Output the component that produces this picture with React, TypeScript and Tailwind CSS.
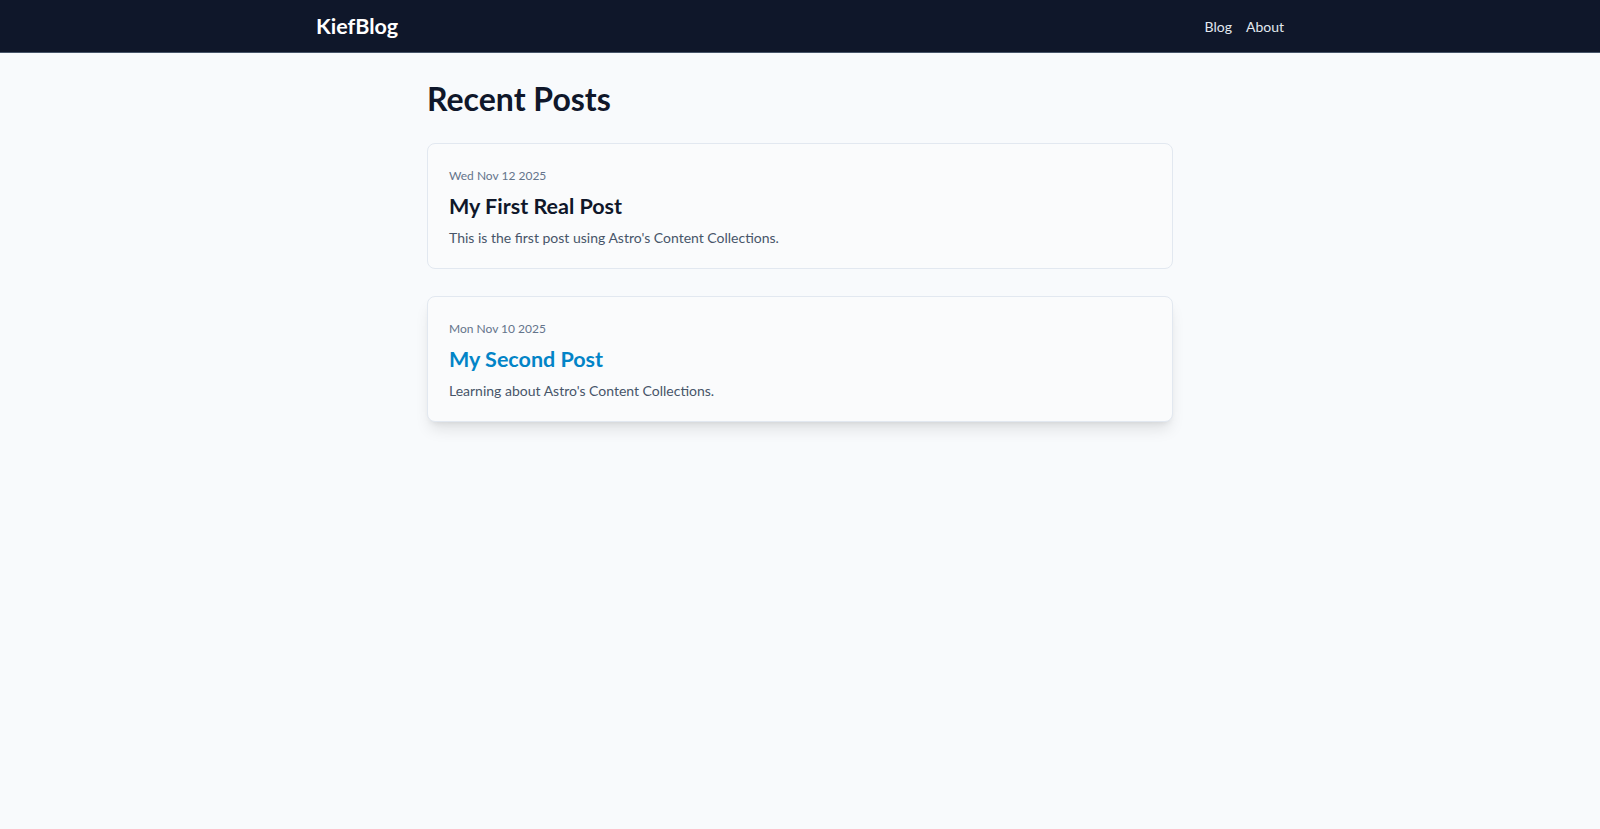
const posts = [
  {
    slug: "first-post",
    date: "Wed Nov 12 2025",
    title: "My First Real Post",
    description: "This is the first post using Astro's Content Collections.",
    hovered: false,
  },
  {
    slug: "second-post",
    date: "Mon Nov 10 2025",
    title: "My Second Post",
    description: "Learning about Astro's Content Collections.",
    hovered: true,
  },
];

export default function App() {
  return (
    <div className="min-h-screen bg-[#f8fafc] font-['Lato',sans-serif] text-[#0f172a]">
      {/* Header */}
      <header className="bg-[#0f172a] border-b border-[#475569]">
        <div className="max-w-5xl mx-auto px-7 h-[52px] flex items-center justify-between">
          <a href="#" className="text-[21.5px] font-bold text-white">
            KiefBlog
          </a>
          <nav className="flex items-center gap-3.5 text-[14px] text-[#e2e8f0]">
            <a href="#">Blog</a>
            <a href="#">About</a>
          </nav>
        </div>
      </header>

      <main className="max-w-3xl mx-auto px-[11px] pt-[26px] pb-8">
        <h1 className="text-[32px] leading-[40px] font-bold mb-6">Recent Posts</h1>

        <div className="flex flex-col gap-[27px]">
          {posts.map((post) => (
            <a
              key={post.slug}
              href="#"
              className={`block bg-[#fafbfc] border border-[#e2e8f0] rounded-lg pl-[21px] pr-5 pt-6 pb-5 ${
                post.hovered ? "shadow-lg" : ""
              }`}
            >
              <p className="text-xs leading-4 text-[#64748b]">{post.date}</p>
              <h2
                className={`mt-2 text-[21.5px] leading-7 font-bold ${
                  post.hovered ? "text-[#0284c7]" : "text-[#0f172a]"
                }`}
              >
                {post.title}
              </h2>
              <p className="mt-2 text-sm leading-5 text-[#475569]">{post.description}</p>
            </a>
          ))}
        </div>
      </main>
    </div>
  );
}
